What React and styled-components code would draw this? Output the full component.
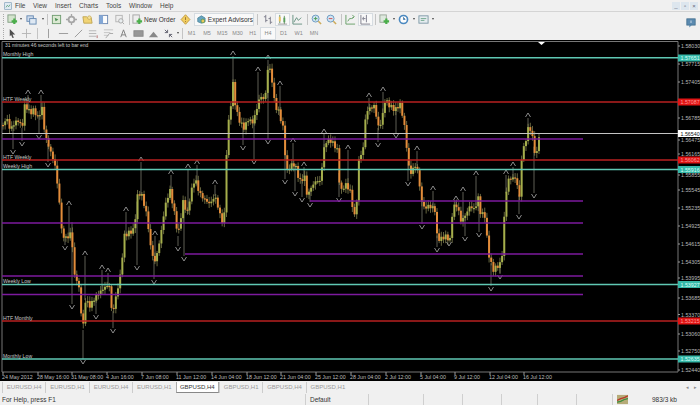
import React from 'react';
import styled, { createGlobalStyle } from 'styled-components';

const GlobalStyle = createGlobalStyle`
  html, body { margin: 0; padding: 0; background: #f0f0f0; }
  body { font-family: "Liberation Sans", Arial, sans-serif; }
`;

const Terminal = styled.div`
  width: 700px;
  height: 405px;
  overflow: hidden;
  display: flex;
  flex-direction: column;
  background: #f0f0f0;
  color: #333;
`;

const MenuBar = styled.div`
  height: 11px;
  display: flex;
  align-items: center;
  border-bottom: 1px solid #d4d4d4;
  flex-shrink: 0;
`;

const MenuIcon = styled.div`
  width: 15px;
  display: flex;
  justify-content: center;
`;

const MenuItem = styled.span`
  font-size: 6.5px;
  width: ${p => p.$w}px;
  color: #444;
`;

const WindowButtons = styled.div`
  margin-left: auto;
  display: flex;
  gap: 1px;
  padding-right: 2px;
`;

const WindowButton = styled.div`
  width: 8px;
  height: 8px;
  background: #dde6ee;
  color: #667;
  font-size: 6px;
  line-height: 8px;
  text-align: center;
`;

const ToolRow = styled.div`
  height: ${p => p.$h}px;
  display: flex;
  align-items: center;
  padding-left: 2px;
  flex-shrink: 0;
  svg {
    opacity: 0.85;
  }
`;

const Grip = styled.div`
  width: 4px;
  height: 11px;
  border-left: 1px dotted #aaa;
  margin-left: 1px;
  box-sizing: border-box;
`;

const Tool = styled.div`
  width: ${p => p.$w || 15}px;
  height: 13px;
  display: flex;
  align-items: center;
  justify-content: center;
  flex-shrink: 0;
  box-sizing: border-box;
  background: ${p => (p.$on ? '#f9f9f9' : 'transparent')};
  border: ${p => (p.$on ? '1px solid #d6dce1' : 'none')};
`;

const Caret = styled.div`
  width: 5px;
  display: flex;
  justify-content: center;
  &::after {
    content: '';
    border-left: 1.5px solid transparent;
    border-right: 1.5px solid transparent;
    border-top: 2px solid #444;
  }
`;

const Sep = styled.div`
  width: ${p => p.$w || 4}px;
  height: 11px;
  flex-shrink: 0;
  display: flex;
  justify-content: center;
  &::after {
    content: '';
    width: 1px;
    background: #c4c4c4;
  }
`;

const ToolLabel = styled.span`
  font-size: 6.5px;
  color: #333;
  white-space: nowrap;
  width: ${p => p.$w}px;
`;

const ExpertButton = styled.div`
  width: 60px;
  height: 13px;
  margin-left: 2px;
  display: flex;
  align-items: center;
  gap: 2px;
  padding-left: 2px;
  box-sizing: border-box;
  background: #f9f9f9;
  border: 1px solid #d6dce1;
`;

const Period = styled(Tool)`
  font-size: 5.5px;
  color: #888;
`;

const ChatIcon = styled.div`
  position: absolute;
  right: 4px;
  top: 14px;
`;

const ChartFrame = styled.div`
  height: 341px;
  background: #000;
  flex-shrink: 0;
  svg {
    display: block;
  }
`;

const TabBar = styled.div`
  height: 13px;
  display: flex;
  align-items: flex-start;
  padding: 1px 0 0 2px;
  box-sizing: border-box;
  flex-shrink: 0;
  position: relative;
`;

const Tab = styled.div`
  width: 43.4px;
  height: 11px;
  box-sizing: border-box;
  font-size: 6px;
  line-height: 10px;
  text-align: center;
  color: ${p => (p.$active ? '#333' : '#999')};
  background: ${p => (p.$active ? '#fff' : 'transparent')};
  border-left: 1px solid ${p => (p.$active ? '#aaa' : '#ccc')};
  border-right: ${p => (p.$active ? '1px solid #aaa' : 'none')};
  border-bottom: ${p => (p.$active ? '1px solid #888' : 'none')};
`;

const TabArrows = styled.div`
  position: absolute;
  right: 3px;
  top: 3px;
  font-size: 5px;
  color: #888;
  display: flex;
  gap: 5px;
`;

const StatusBar = styled.div`
  flex: 1;
  display: flex;
  align-items: center;
  font-size: 6.5px;
  color: #333;
`;

const StatusCell = styled.div`
  width: ${p => p.$w}px;
  height: 100%;
  display: flex;
  align-items: center;
  box-sizing: border-box;
  padding-left: ${p => p.$pad || 0}px;
  border-right: ${p => (p.$plain ? 'none' : '1px solid #cfcfcf')};
  flex-shrink: 0;
`;

const Svg = ({ children, w = 11, h = 11 }) => (
  <svg width={w} height={h} viewBox="0 0 12 12">{children}</svg>
);

const icons = {
  newChart: <><rect x="1" y="1" width="8" height="8" fill="#cfe3c8" stroke="#6f8f70" /><path d="M8 5v6M5 8h6" stroke="#2ea32e" strokeWidth="2.4" /></>,
  profile: <><rect x="1" y="2" width="7" height="6" fill="#c8d8ec" stroke="#4f78a8" /><rect x="4" y="5" width="7" height="6" fill="#dbe7f4" stroke="#4f78a8" /></>,
  market: <><rect x="1.5" y="1.5" width="9" height="9" fill="#d9e8cf" stroke="#5c8f5c" /><path d="M4 4l4 2-3 2z" fill="#2f7f3a" /></>,
  nav: <><circle cx="6" cy="6" r="3.2" fill="none" stroke="#9a9a9a" strokeWidth="2" /><path d="M6 0v3M6 9v3M0 6h3M9 6h3" stroke="#9a9a9a" strokeWidth="1.4" /></>,
  folder: <><path d="M1 3h4l1 1h4l1 6H2z" fill="#f2d060" stroke="#b89838" /><circle cx="8" cy="4" r="2" fill="#f5e08a" stroke="#b89838" strokeWidth=".7" /></>,
  win: <><rect x="1.5" y="1.5" width="9" height="9" fill="#fff" stroke="#5577a8" /><rect x="1.5" y="1.5" width="4" height="9" fill="#6f9bd2" /></>,
  print: <><rect x="2" y="1.5" width="7" height="7" fill="#eee" stroke="#aaa" /><circle cx="7.5" cy="7.5" r="2.4" fill="#e8eef0" stroke="#999" /><path d="M9 9l2 2" stroke="#999" /></>,
  order: <><rect x="1" y="1" width="7" height="9" fill="#eee" stroke="#999" /><path d="M8 5v6M5 8h6" stroke="#2ea32e" strokeWidth="2.4" /></>,
  alert: <><path d="M6 .8L10.8 6 6 11.2 1.2 6z" fill="#f3c948" stroke="#b98a20" /><path d="M6 3.5v3M6 7.8v1" stroke="#8a5a10" /></>,
  expert: <><path d="M1 4l5-3 5 3v5l-5 2-5-2z" fill="#4f97b8" stroke="#2d6d88" /><circle cx="8" cy="8" r="2.6" fill="#e8c040" stroke="#2f7f3a" /></>,
  bars: <path d="M3 1v8M1 3h2M3 7h2M8 3v8M6 5h2M8 9h2" stroke="#667" fill="none" />,
  candles: <><path d="M3 1v9M8 2v9" stroke="#4b7f4b" /><rect x="2" y="3" width="2" height="5" fill="#e8b840" /><rect x="7" y="4" width="2" height="5" fill="#3f8f3f" /><path d="M1 11h10" stroke="#888" /></>,
  line: <path d="M1 1v10h10M2 9l3-5 2 3 3-3" stroke="#4b7f6b" fill="none" />,
  zoomIn: <><circle cx="5" cy="5" r="3.8" fill="#cfe4f4" stroke="#4f88b8" /><path d="M3 5h4M5 3v4" stroke="#2e8f3e" /><path d="M8 8l3 3" stroke="#c8a040" strokeWidth="1.6" /></>,
  zoomOut: <><circle cx="5" cy="5" r="3.8" fill="#cfe4f4" stroke="#4f88b8" /><path d="M3 5h4" stroke="#c83030" /><path d="M8 8l3 3" stroke="#c8a040" strokeWidth="1.6" /></>,
  scroll: <path d="M1 1v10h10M3 8l2-3h2l3-2M8 1l2 2-2 2" stroke="#4b8f4b" fill="none" />,
  shift: <><path d="M1 1v10h10M7 1v8" stroke="#667" fill="none" /><path d="M3 5h3M4 3l-1 2 1 2" stroke="#667" fill="none" /></>,
  indic: <><rect x="1" y="1" width="7" height="8" fill="#dce8dc" stroke="#8a9a8a" /><path d="M8 5v6M5 8h6" stroke="#2ea32e" strokeWidth="2.4" /></>,
  clock: <><circle cx="6" cy="6" r="4.4" fill="#fff" stroke="#2f78b8" strokeWidth="1.8" /><path d="M6 3.5V6h2" stroke="#2f78b8" /></>,
  tpl: <><rect x="1" y="2" width="10" height="8" fill="#e4ecf0" stroke="#6a8a9a" /><path d="M3 5h6M3 7h4" stroke="#5a9a7a" /></>,
  cursor: <path d="M3 1l6 6H6l1.5 3.5-1.5.5L4.5 7.6 3 9z" fill="#333" />,
  cross: <path d="M6 1v10M1 6h10" stroke="#aaa" />,
  vline: <path d="M6 1v10" stroke="#888" />,
  hline: <path d="M1 6h10" stroke="#888" />,
  trend: <path d="M2 10l8-8" stroke="#888" />,
  channel: <><path d="M1 3h8M1 6h8M1 9h8" stroke="#aaa" /><path d="M10 8v3" stroke="#a55" /></>,
  fibo: <><path d="M1 2h10M1 5h7M1 8h5" stroke="#bbb" /><path d="M3 11l4-5h4" stroke="#999" fill="none" /></>,
  text: <path d="M3 10l3-8 3 8M4.2 7.5h3.6" stroke="#666" fill="none" />,
  label: <rect x="1" y="3" width="10" height="6" fill="#888" stroke="#777" />,
  mountain: <path d="M1 10l5-6 5 6z" fill="#777" />,
  arrows: <path d="M2 2l3 3M5 2v3H2M10 10L7 7M7 10V7h3" stroke="#445" fill="none" />,
  chat: <><rect x="1" y="1" width="10" height="7.5" fill="#5b8ab0" stroke="#44708f" /><path d="M4 8.5v3l3-3" fill="#5b8ab0" /><path d="M6 3v3" stroke="#dfe9f0" /></>,
  signal: <><rect x="0" y="1" width="12" height="10" fill="#b6ab78" /><path d="M0 7l4-2 4-1 4-2" stroke="#b83a2a" strokeWidth="1.4" /><path d="M0 9l4-1 4-2 4-1" stroke="#3f8f3f" strokeWidth="1.4" /></>,
  logo: <><rect x="1" y="1" width="10" height="10" fill="#dfeaf2" stroke="#7f9fb8" /><path d="M3 8l2-3 2 2 2-3" stroke="#3f8f5f" fill="none" /></>,
};

const Ico = ({ name, w, h }) => <Svg w={w} h={h}>{icons[name]}</Svg>;

// price path read off the picture: [x, y] of the closes
const PATH = [
  [3, 125], [7, 118], [10, 130], [13, 125], [18, 120], [22, 128], [25, 104], [30, 113], [34, 110], [38, 118], [42, 108], [45, 135],
  [50, 150], [55, 165], [58, 190], [60, 207], [62, 235], [65, 238], [70, 236], [72, 222], [73, 275], [78, 280], [83, 330], [85, 300],
  [90, 306], [96, 296], [102, 290], [106, 286], [110, 286], [112, 316], [117, 292], [121, 272], [124, 236], [130, 232], [134, 230],
  [138, 192], [142, 196], [147, 216], [151, 250], [155, 262], [160, 240], [165, 206], [170, 190], [175, 216], [178, 236], [183, 202],
  [188, 214], [190, 196], [195, 178], [199, 192], [203, 198], [210, 204], [215, 196], [222, 222], [225, 212], [227, 134], [230, 112],
  [233, 84], [236, 110], [240, 122], [244, 128], [249, 118], [252, 124], [256, 112], [260, 96], [265, 100], [268, 66], [271, 72],
  [275, 106], [279, 112], [283, 128], [285, 152], [287, 172], [290, 166], [295, 164], [298, 176], [301, 182], [305, 176], [307, 196],
  [312, 186], [317, 180], [320, 182], [325, 142], [330, 140], [335, 146], [338, 152], [340, 194], [345, 184], [350, 190], [352, 204],
  [356, 222], [358, 162], [363, 150], [366, 112], [370, 108], [375, 106], [378, 128], [382, 120], [385, 100], [390, 106], [395, 110],
  [400, 104], [404, 122], [408, 160], [410, 176], [413, 168], [417, 166], [420, 190], [423, 208], [430, 206], [435, 210], [436, 234],
  [440, 240], [445, 236], [450, 240], [453, 206], [458, 206], [460, 222], [465, 216], [470, 206], [475, 210], [478, 196], [480, 212],
  [485, 216], [488, 250], [490, 260], [493, 270], [500, 264], [503, 250], [505, 200], [508, 180], [512, 178], [516, 178], [520, 200],
  [522, 150], [525, 145], [529, 124], [533, 140], [536, 160], [539, 135],
];

const UP_MARKS = [
  [28, 92], [41, 92], [69, 203], [85, 253], [102, 267], [108, 270], [126, 209], [141, 159], [155, 233], [171, 172], [188, 166], [197, 162],
  [215, 182], [233, 53], [258, 69], [268, 57], [280, 83], [293, 140], [304, 164], [324, 131], [348, 147], [369, 95], [383, 89], [417, 148],
  [433, 188], [456, 198], [463, 189], [476, 173], [506, 172], [513, 164], [528, 115],
];

const DOWN_MARKS = [
  [13, 152], [22, 144], [39, 137], [48, 165], [65, 248], [72, 307], [83, 362], [96, 317], [113, 331], [137, 268], [154, 282], [178, 249],
  [184, 259], [243, 148], [254, 162], [268, 142], [285, 182], [295, 194], [302, 200], [310, 205], [339, 200], [378, 145], [396, 136], [408, 184],
  [422, 227], [437, 250], [449, 244], [465, 239], [479, 235], [491, 289], [500, 277], [519, 217], [534, 196],
];

const priceAt = x => {
  for (let i = 1; i < PATH.length; i++) {
    const [x0, y0] = PATH[i - 1];
    const [x1, y1] = PATH[i];
    if (x <= x1) return y0 + ((y1 - y0) * (x - x0)) / (x1 - x0 || 1);
  }
  return PATH[PATH.length - 1][1];
};

const buildCandles = () => {
  const out = [];
  let open = priceAt(3);
  for (let x = 3; x <= 539; x += 2.17) {
    const close = priceAt(x) + Math.sin(x * 7.3) * 2.2;
    out.push({ x, open, close, top: Math.min(open, close) - 2 - Math.abs(Math.sin(x * 3.1)) * 3, low: Math.max(open, close) + 2 + Math.abs(Math.cos(x * 2.3)) * 3 });
    open = close;
  }
  return out;
};

const CANDLES = buildCandles();

const LEVELS = [
  { y: 57.7, x1: 2, x2: 678, c: '#5fc8b4' },
  { y: 102, x1: 2, x2: 678, c: '#b82020' },
  { y: 139, x1: 2, x2: 583, c: '#7d1a9e' },
  { y: 160, x1: 2, x2: 678, c: '#b82020' },
  { y: 169.5, x1: 2, x2: 678, c: '#5fc8b4' },
  { y: 201, x1: 310, x2: 583, c: '#7d1a9e' },
  { y: 223, x1: 2, x2: 583, c: '#7d1a9e' },
  { y: 254, x1: 185, x2: 583, c: '#7d1a9e' },
  { y: 276, x1: 2, x2: 583, c: '#7d1a9e' },
  { y: 284.5, x1: 2, x2: 678, c: '#5fc8b4' },
  { y: 294.5, x1: 2, x2: 583, c: '#7d1a9e' },
  { y: 321, x1: 2, x2: 678, c: '#b82020' },
  { y: 359, x1: 2, x2: 678, c: '#5fc8b4' },
];

const NOTES = [
  ['31 minutes 46 seconds left to bar end', 5, 47, 5],
  ['Monthly High', 3, 56, 5.2],
  ['HTF Weekly', 3, 101, 5.2],
  ['HTF Weekly', 3, 158.5, 5.2],
  ['Weekly High', 3, 168, 5.2],
  ['Weekly Low', 3, 283, 5.2],
  ['HTF Monthly', 3, 319.5, 5.2],
  ['Monthly Low', 3, 358, 5.2],
];

const PRICES = [
  ['1.58030', 48], ['1.57715', 66], ['1.57405', 84], ['1.56785', 120], ['1.56475', 142], ['1.56165', 156], ['1.55855', 177], ['1.55545', 192],
  ['1.55235', 210], ['1.54925', 228], ['1.54615', 246], ['1.54305', 264], ['1.53995', 280], ['1.53685', 300], ['1.53370', 316.5], ['1.53060', 336],
  ['1.52750', 353], ['1.52440', 372],
];

const TAGS = [
  ['1.57651', 58, '#35b8a8', '#d8fff8'],
  ['1.57087', 102, '#e01414', '#ff9a9a'],
  ['1.56540', 133.5, '#ffffff', '#111'],
  ['1.56062', 160, '#e01414', '#ff9a9a'],
  ['1.55916', 169.5, '#35b8a8', '#d8fff8'],
  ['1.53927', 284.5, '#35b8a8', '#d8fff8'],
  ['1.53215', 321, '#e01414', '#ff9a9a'],
  ['1.52635', 359, '#35b8a8', '#d8fff8'],
];

const TIMES = [
  ['24 May 2012', 2], ['28 May 16:00', 37], ['31 May 08:00', 71], ['4 Jun 16:00', 106], ['7 Jun 08:00', 141], ['11 Jun 12:00', 176],
  ['14 Jun 04:00', 211], ['18 Jun 12:00', 246], ['21 Jun 04:00', 280], ['25 Jun 12:00', 315], ['28 Jun 04:00', 350], ['2 Jul 12:00', 385],
  ['5 Jul 04:00', 420], ['9 Jul 12:00', 454], ['12 Jul 04:00', 489], ['16 Jul 12:00', 523],
];

const TABS = ['EURUSD,H4', 'EURUSD,H1', 'EURUSD,H4', 'EURUSD,H1', 'GBPUSD,H4', 'GBPUSD,H1', 'GBPUSD,H4', 'GBPUSD,H1'];

const PriceChart = () => (
  <svg width="700" height="341" viewBox="0 40 700 341" fontFamily="Liberation Sans, Arial, sans-serif">
    {/* frame */}
    <path d="M2 372V41.5H678V372H2" fill="none" stroke="#777" strokeWidth="1" />
    <path d="M538 42h7l-3.5 3z" fill="#fff" />

    {/* wicks up to the swing marks */}
    {UP_MARKS.map(([x, y]) => <line key={`u${x}`} x1={x} x2={x} y1={y + 3} y2={priceAt(x)} stroke="#77776a" strokeWidth="0.8" />)}
    {DOWN_MARKS.map(([x, y]) => <line key={`d${x}`} x1={x} x2={x} y1={y - 3} y2={priceAt(x)} stroke="#77776a" strokeWidth="0.8" />)}

    {CANDLES.map(c => (
      <g key={c.x}>
        <line x1={c.x} x2={c.x} y1={c.top} y2={c.low} stroke="#80804f" strokeWidth="0.8" />
        <rect
          x={c.x - 1}
          y={Math.min(c.open, c.close)}
          width="2"
          height={Math.max(Math.abs(c.open - c.close), 1.2)}
          fill={c.close > c.open ? '#e38c3a' : '#a5ae4c'}
        />
      </g>
    ))}

    {/* swing marks */}
    {UP_MARKS.map(([x, y]) => <path key={`mu${x}`} d={`M${x - 2.5} ${y + 2}L${x} ${y - 2}L${x + 2.5} ${y + 2}`} fill="none" stroke="#999" strokeWidth="0.9" />)}
    {DOWN_MARKS.map(([x, y]) => <path key={`md${x}`} d={`M${x - 2.5} ${y - 2}L${x} ${y + 2}L${x + 2.5} ${y - 2}`} fill="none" stroke="#999" strokeWidth="0.9" />)}

    {LEVELS.map(l => <line key={l.y} x1={l.x1} x2={l.x2} y1={l.y} y2={l.y} stroke={l.c} strokeWidth="1.6" />)}
    <line x1="2" x2="678" y1="133.5" y2="133.5" stroke="#c4c4c4" strokeWidth="1" />

    {NOTES.map(([t, x, y, s]) => <text key={`${t}${y}`} x={x} y={y} fontSize={s} fill="#c8c8c8">{t}</text>)}

    {PRICES.map(([t, y]) => (
      <g key={t}>
        <line x1="678" x2="680" y1={y - 2} y2={y - 2} stroke="#999" />
        <text x="681" y={y} fontSize="5.3" fill="#b8b8b8">{t}</text>
      </g>
    ))}

    {TAGS.map(([t, y, bg, fg]) => (
      <g key={t}>
        <rect x="678" y={y - 3.5} width="22" height="7" fill={bg} />
        <text x="680.5" y={y + 2} fontSize="5.3" fill={fg}>{t}</text>
      </g>
    ))}

    {TIMES.map(([t, x]) => (
      <g key={t}>
        <line x1={x + 1} x2={x + 1} y1="372" y2="375" stroke="#999" />
        <text x={x} y="379" fontSize="5.3" fill="#bdbdbd">{t}</text>
      </g>
    ))}
  </svg>
);

const MainTools = () => (
  <ToolRow $h={14}>
    <Grip />
    <Tool $w={11}><Ico name="newChart" /></Tool>
    <Caret />
    <Tool $w={17}><Ico name="profile" /></Tool>
    <Caret />
    <Sep />
    <Tool $w={15}><Ico name="market" /></Tool>
    <Tool $w={15}><Ico name="nav" /></Tool>
    <Tool $w={16}><Ico name="folder" /></Tool>
    <Tool $w={16}><Ico name="win" /></Tool>
    <Tool $w={16}><Ico name="print" /></Tool>
    <Sep />
    <Tool $w={13}><Ico name="order" /></Tool>
    <ToolLabel $w={34}>New Order</ToolLabel>
    <Tool $w={14}><Ico name="alert" /></Tool>
    <ExpertButton><Ico name="expert" /><ToolLabel>Expert Advisors</ToolLabel></ExpertButton>
    <Sep $w={7} />
    <Tool $w={14}><Ico name="bars" /></Tool>
    <Tool $w={15} $on><Ico name="candles" /></Tool>
    <Tool $w={15}><Ico name="line" /></Tool>
    <Sep />
    <Tool $w={15}><Ico name="zoomIn" /></Tool>
    <Tool $w={15}><Ico name="zoomOut" /></Tool>
    <Sep />
    <Tool $w={15}><Ico name="scroll" /></Tool>
    <Tool $w={15} $on><Ico name="shift" /></Tool>
    <Sep />
    <Tool $w={14}><Ico name="indic" /></Tool>
    <Caret />
    <Tool $w={15}><Ico name="clock" /></Tool>
    <Caret />
    <Tool $w={14}><Ico name="tpl" /></Tool>
    <Caret />
  </ToolRow>
);

const DrawTools = () => (
  <ToolRow $h={14}>
    <Grip />
    <Tool $w={11}><Ico name="cursor" /></Tool>
    <Tool $w={16}><Ico name="cross" /></Tool>
    <Sep $w={7} />
    <Tool><Ico name="vline" /></Tool>
    <Tool><Ico name="hline" /></Tool>
    <Tool><Ico name="trend" /></Tool>
    <Tool><Ico name="channel" /></Tool>
    <Tool><Ico name="fibo" /></Tool>
    <Tool><Ico name="text" /></Tool>
    <Tool><Ico name="label" /></Tool>
    <Tool><Ico name="mountain" /></Tool>
    <Tool $w={14}><Ico name="arrows" /></Tool>
    <Caret />
    <Sep />
    {['M1', 'M5', 'M15', 'M30', 'H1', 'H4', 'D1', 'W1', 'MN'].map(p => (
      <Period key={p} $on={p === 'H4'} $w={15.3}>{p}</Period>
    ))}
  </ToolRow>
);

export default function App() {
  return (
    <Terminal>
      <GlobalStyle />
      <MenuBar>
        <MenuIcon><Ico name="logo" w={8} h={8} /></MenuIcon>
        {[['File', 18], ['View', 22], ['Insert', 24], ['Charts', 27], ['Tools', 23], ['Window', 31], ['Help', 20]].map(([m, w]) => (
          <MenuItem key={m} $w={w}>{m}</MenuItem>
        ))}
        <WindowButtons>
          <WindowButton>_</WindowButton>
          <WindowButton>▫</WindowButton>
          <WindowButton>×</WindowButton>
        </WindowButtons>
      </MenuBar>
      <MainTools />
      <ChatIcon><Ico name="chat" w={10} h={10} /></ChatIcon>
      <DrawTools />
      <ChartFrame><PriceChart /></ChartFrame>
      <TabBar>
        {TABS.map((t, i) => <Tab key={i} $active={i === 4}>{t}</Tab>)}
        <TabArrows><span>◂</span><span>▸</span></TabArrows>
      </TabBar>
      <StatusBar>
        <StatusCell $w={306} $pad={2}>For Help, press F1</StatusCell>
        <StatusCell $w={63} $pad={4}>Default</StatusCell>
        <StatusCell $w={55} />
        <StatusCell $w={39} />
        <StatusCell $w={39} />
        <StatusCell $w={36} />
        <StatusCell $w={39} />
        <StatusCell $w={36} />
        <StatusCell $w={39} $pad={4} $plain><Ico name="signal" /></StatusCell>
        <StatusCell $w={48} $plain>983/3 kb</StatusCell>
      </StatusBar>
    </Terminal>
  );
}
